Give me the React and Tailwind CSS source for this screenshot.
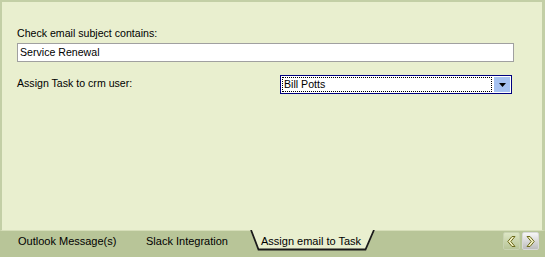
export default function App() {
  return (
    <div className="w-[545px] h-[257px] bg-[#b8c598] flex flex-col font-['Liberation_Sans',sans-serif] text-[10.6px] text-black overflow-hidden">
      <div className="h-[231px] bg-[#e9efcf] border-t-2 border-l-2 border-r-[3px] border-b border-t-[#c3cfa6] border-l-[#c3cfa6] border-r-[#c3cfa6] border-b-[#d6deb9] pl-[15px] pr-[29px] pt-[24px]">
        <div className="leading-[14px]">Check email subject contains:</div>
        <div className="mt-[3px] h-[19px] w-[497px] bg-white border border-[#a0a0a0] px-[2px] leading-[17px]">Service Renewal</div>
        <div className="flex items-start mt-[13px]">
          <div className="w-[263px] leading-[14px] pt-[1px]">Assign Task to crm user:</div>
          <div className="h-[19px] w-[232px] bg-white border border-[#000080] flex p-[1px]">
            <div className="flex-1 border border-dotted border-black leading-[13px] pl-[1px]">Bill Potts</div>
            <div className="w-[16px] bg-[#a5c1f0] flex items-center justify-center ml-[2px]">
              <svg width="7" height="4" viewBox="0 0 7 4"><path d="M0 0h7L3.5 4z" fill="#000" /></svg>
            </div>
          </div>
        </div>
      </div>
      <div className="flex-1 flex items-start text-[11px]">
        <div className="w-[146px] pl-[18px] pt-[3px] leading-[14px] shrink-0">Outlook Message(s)</div>
        <div className="w-[104px] pt-[3px] leading-[14px] shrink-0">Slack Integration</div>
        <div className="relative w-[127px] h-[22px] -mt-px shrink-0">
          <svg className="absolute inset-0" width="127" height="22" viewBox="0 0 127 22">
            <path d="M0 0 L8 20 L116 20 L125 0 Z" fill="#e9efcf" />
            <path d="M1 0 L8.5 19.5 L115.5 19.5 L124 0" fill="none" stroke="#1a1a1a" strokeWidth="1.8" />
          </svg>
          <div className="relative pl-[11px] pt-[4px] leading-[14px]">Assign email to Task</div>
        </div>
        <div className="ml-auto mr-[6px] mt-[1px] flex gap-[2px]">
          <div className="w-[17px] h-[18px] rounded-[2px] border border-[#c8d2b0] bg-gradient-to-b from-[#dde6c4] to-[#b8c598] flex items-center justify-center">
            <svg width="9" height="11" viewBox="0 0 9 11"><path d="M5 0.5 L0.8 5.5 L5 10.5 L8 10.5 L3.8 5.5 L8 0.5 Z" fill="#f4f2c8" stroke="#6b6a1a" strokeWidth="1" strokeLinejoin="round" /></svg>
          </div>
          <div className="w-[17px] h-[18px] rounded-[2px] border border-[#d8d8d8] bg-gradient-to-b from-[#f6f6f6] to-[#bdbdbd] flex items-center justify-center">
            <svg width="9" height="11" viewBox="0 0 9 11"><path d="M4 0.5 L8.2 5.5 L4 10.5 L1 10.5 L5.2 5.5 L1 0.5 Z" fill="#f4f2c8" stroke="#6b6a1a" strokeWidth="1" strokeLinejoin="round" /></svg>
          </div>
        </div>
      </div>
    </div>
  );
}
